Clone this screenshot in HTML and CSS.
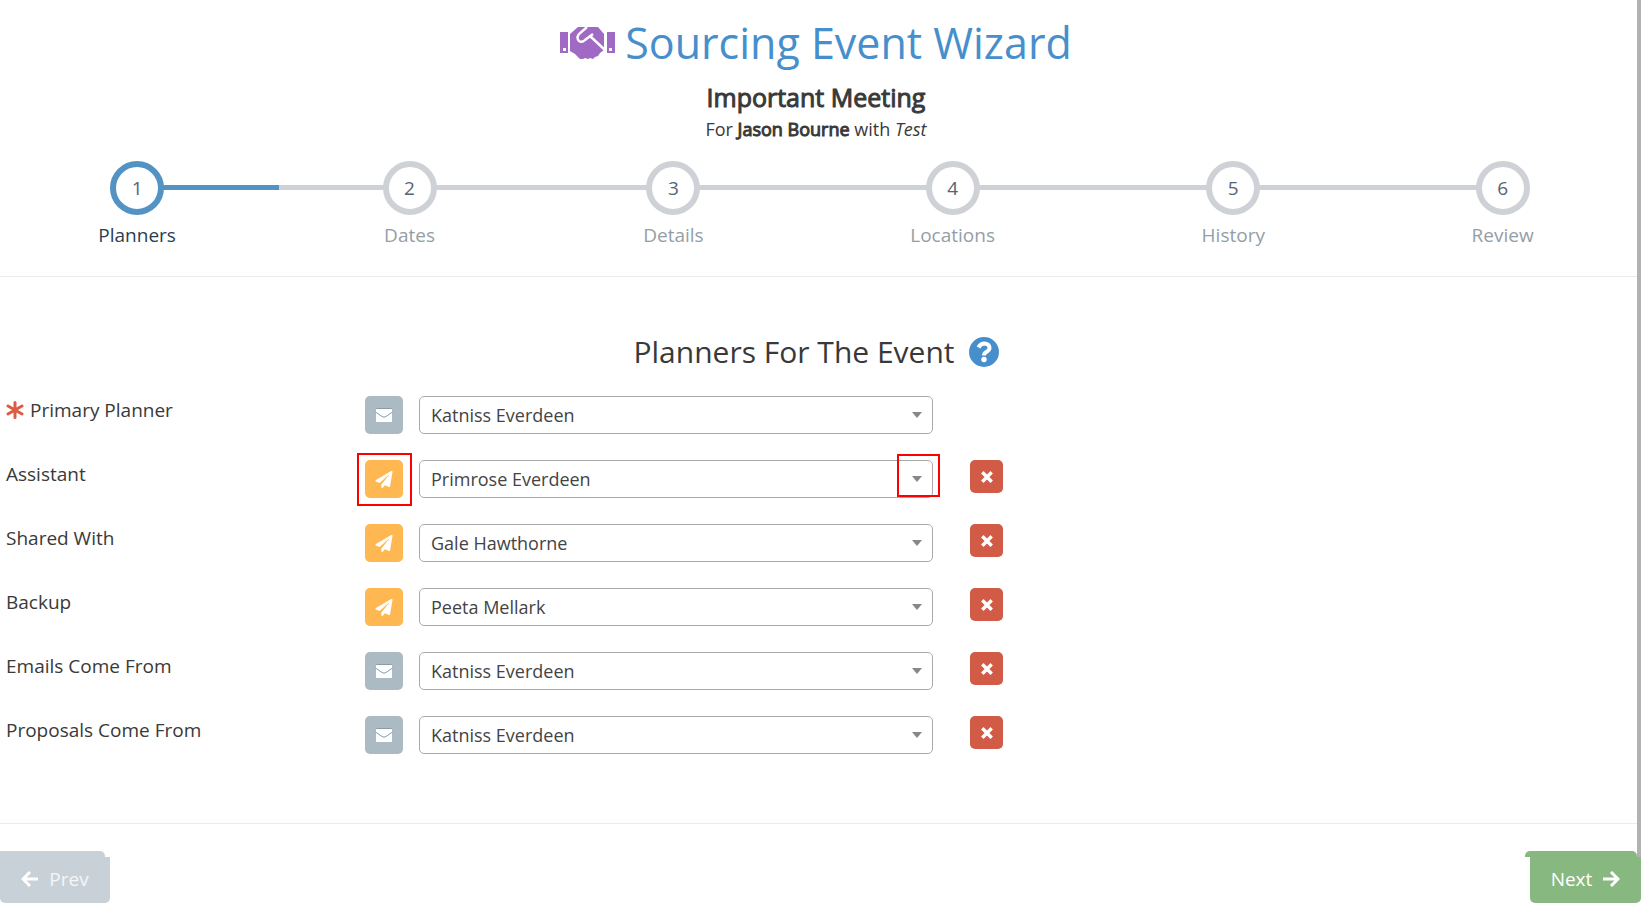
FILE: index.html
```html
<!DOCTYPE html>
<html lang="en">
<head>
    <meta charset="UTF-8">
    <meta name="viewport" content="width=device-width, initial-scale=1.0">
    <title>Sourcing Event Wizard</title>
    <link rel="stylesheet" href="styles.css">
</head>
<body>
    <!-- Shared icons -->
    <svg class="sprite" aria-hidden="true">
        <symbol id="icon-mail" viewBox="0 0 18 14">
            <path fill="#fff" d="M1 0h16v14H1z"/>
            <path fill="none" stroke="#8d9ba5" d="M1 0.5h16M0.5 4L7 8.500q2 1.300 4 0L17.500 4"/>
        </symbol>
        <symbol id="icon-send" viewBox="0 0 512 512">
            <path fill="#fff" d="M476 3.200L12.500 270.600c-18.100 10.400-15.800 35.600 2.200 43.200L121 358.400l287.300-253.200c5.500-4.900 13.300 2.600 8.600 8.300L176 407v80.500c0 23.600 28.500 32.900 42.500 15.800L282 426l124.600 52.200c14.200 6 30.400-2.900 33-18.200l72-432C515 7.800 493.300-6.800 476 3.200z"/>
        </symbol>
        <symbol id="icon-remove" viewBox="0 0 12 12">
            <path fill="none" stroke="#fff" stroke-width="3.400" d="M1.300 1.300l9.400 9.400M10.700 1.300l-9.400 9.400"/>
        </symbol>
    </svg>

    <header>
        <h1>
            <svg class="logo" viewBox="0 0 55 32" aria-hidden="true">
                <path fill="#a069c3" d="M0 5h8v21H0zM47 5h8v21h-8zM18 0h20l6 7v16l-4 3-2 3-3 1-2 2-3-1-2 1-3-1-2 1h-3l-5-5-5-3V7z"/>
                <path fill="none" stroke="#fff" stroke-width="2.400" d="M27 0l-8 7q-3 4 0 7 3 2 6-1l8-6M30 9l15 14"/>
                <path fill="#fff" d="M3 21h3v3H3zM49 21h3v3h-3z"/>
            </svg>
            Sourcing Event Wizard
        </h1>
        <h2>Important Meeting</h2>
        <p class="subtitle">For <b>Jason Bourne</b> with <i>Test</i></p>

        <ol class="steps">
            <li class="active"><span class="circle">1</span><span class="title">Planners</span></li>
            <li><span class="circle">2</span><span class="title">Dates</span></li>
            <li><span class="circle">3</span><span class="title">Details</span></li>
            <li><span class="circle">4</span><span class="title">Locations</span></li>
            <li><span class="circle">5</span><span class="title">History</span></li>
            <li><span class="circle">6</span><span class="title">Review</span></li>
        </ol>
    </header>

    <main>
        <h3>
            Planners For The Event
            <svg class="help" viewBox="0 0 30 30" role="img" aria-label="Help">
                <circle cx="15" cy="15" r="15" fill="#478fcc"/>
                <path fill="none" stroke="#fff" stroke-width="4" d="M9.500 10.500q2-4 6-4 5 0.500 5 4.500 0 2-2.500 3.500-3 1.500-3 4"/>
                <circle cx="15" cy="22.500" r="2.700" fill="#fff"/>
            </svg>
        </h3>

        <div class="row">
            <label for="primary">
                <svg class="required" viewBox="0 0 18 18" aria-hidden="true"><path stroke="#dd5a43" stroke-width="3" stroke-linecap="round" d="M9 1.500v15M2 5l14 8M16 5L2 13"/></svg>
                Primary Planner
            </label>
            <button class="btn mail" aria-label="Email"><svg><use href="#icon-mail"/></svg></button>
            <div class="field"><select id="primary"><option>Katniss Everdeen</option></select></div>
        </div>
        <div class="row highlighted">
            <label for="assistant">Assistant</label>
            <button class="btn send" aria-label="Send"><svg><use href="#icon-send"/></svg></button>
            <div class="field"><select id="assistant"><option>Primrose Everdeen</option></select></div>
            <button class="btn remove" aria-label="Remove"><svg><use href="#icon-remove"/></svg></button>
        </div>
        <div class="row">
            <label for="shared">Shared With</label>
            <button class="btn send" aria-label="Send"><svg><use href="#icon-send"/></svg></button>
            <div class="field"><select id="shared"><option>Gale Hawthorne</option></select></div>
            <button class="btn remove" aria-label="Remove"><svg><use href="#icon-remove"/></svg></button>
        </div>
        <div class="row">
            <label for="backup">Backup</label>
            <button class="btn send" aria-label="Send"><svg><use href="#icon-send"/></svg></button>
            <div class="field"><select id="backup"><option>Peeta Mellark</option></select></div>
            <button class="btn remove" aria-label="Remove"><svg><use href="#icon-remove"/></svg></button>
        </div>
        <div class="row">
            <label for="emails">Emails Come From</label>
            <button class="btn mail" aria-label="Email"><svg><use href="#icon-mail"/></svg></button>
            <div class="field"><select id="emails"><option>Katniss Everdeen</option></select></div>
            <button class="btn remove" aria-label="Remove"><svg><use href="#icon-remove"/></svg></button>
        </div>
        <div class="row">
            <label for="proposals">Proposals Come From</label>
            <button class="btn mail" aria-label="Email"><svg><use href="#icon-mail"/></svg></button>
            <div class="field"><select id="proposals"><option>Katniss Everdeen</option></select></div>
            <button class="btn remove" aria-label="Remove"><svg><use href="#icon-remove"/></svg></button>
        </div>
    </main>

    <footer>
        <button class="nav prev" disabled>
            <svg viewBox="0 0 18 16" aria-hidden="true"><path d="M9 1L2 8l7 7M2 8h15"/></svg>
            Prev
        </button>
        <button class="nav next">
            Next
            <svg viewBox="0 0 18 16" aria-hidden="true"><path d="M9 1l7 7-7 7M16 8H1"/></svg>
        </button>
    </footer>

    <div class="scrollbar"></div>
</body>
</html>
```
FILE: styles.css
```css
/* General styling */
*, *::before, *::after {
    box-sizing: border-box;
}

body {
    position: relative;
    margin: 0;
    font-family: "Open Sans", sans-serif;
    font-size: 18px;
    color: #393939;
    background-color: #fff;
}

.sprite {
    display: none;
}

/* Header */
header {
    padding: 12px 4px 27px 0;
    border-bottom: 1px solid #ebebeb;
    text-align: center;
}

h1, h2, h3, p {
    margin: 0;
    padding-right: 5px;
    font-weight: 400;
}

h1 {
    display: flex;
    justify-content: center;
    align-items: center;
    gap: 10px;
    font-size: 43px;
    line-height: 62px;
    color: #478fcc;
}

.logo {
    width: 55px;
    height: 32px;
}

h2 {
    margin-top: 7px;
    font-size: 25px;
    line-height: 32px;
    -webkit-text-stroke: 1px #393939;
}

.subtitle {
    line-height: 32px;
}

.subtitle b {
    font-weight: 400;
    -webkit-text-stroke: 1px #393939;
}

/* Wizard steps */
.steps {
    display: flex;
    margin: 16px 0 0 -5px;
    padding: 0;
    list-style: none;
}

.steps li {
    position: relative;
    flex: 1 1 auto;
    display: flex;
    flex-direction: column;
    align-items: center;
}

/* connecting line, one half on each side of the circle */
.steps li::before,
.steps li::after {
    content: "";
    position: absolute;
    top: 24px;
    width: 50%;
    height: 5px;
    background-color: #ced1d6;
}

.steps li::before {
    left: 0;
}

.steps li::after {
    right: 0;
}

.steps li:first-child::before,
.steps li:last-child::after {
    display: none;
}

.circle {
    position: relative;
    z-index: 1;
    width: 54px;
    height: 54px;
    border: 6px solid #ced1d6;
    border-radius: 50%;
    background-color: #fff;
    font-size: 19px;
    line-height: 42px;
    color: #546474;
}

.title {
    margin-top: 6px;
    font-size: 19px;
    line-height: 28px;
    color: #949ea7;
}

.steps .active::after {
    background-color: #5293c4;
}

.active .circle {
    border-color: #5293c4;
}

.active .title {
    color: #2b3d53;
}

/* Planner form */
main {
    padding: 52px 4px 69px 0;
    border-bottom: 1px solid #ebebeb;
}

h3 {
    display: flex;
    justify-content: center;
    align-items: center;
    gap: 14px;
    margin-bottom: 21px;
    font-size: 30px;
    line-height: 46px;
}

.help {
    width: 30px;
    height: 30px;
}

.row {
    display: grid;
    grid-template-columns: 365fr 38px 567fr 33px 634fr;
    align-items: start;
    height: 38px;
    margin-bottom: 26px;
}

.row:last-child {
    margin-bottom: 0;
}

label {
    display: flex;
    align-items: center;
    gap: 6px;
    padding-left: 6px;
    font-size: 19px;
    line-height: 28px;
}

.required {
    width: 18px;
    height: 18px;
}

.btn {
    position: relative;
    display: flex;
    justify-content: center;
    align-items: center;
    width: 38px;
    height: 38px;
    padding: 0;
    border: none;
    border-radius: 5px;
    cursor: pointer;
}

.btn svg {
    width: 18px;
    height: 14px;
}

.mail {
    background-color: #abbac3;
}

.send {
    background-color: #ffb752;
}

.send svg {
    height: 17px;
}

.remove {
    width: 33px;
    height: 33px;
    background-color: #d15b47;
}

.remove svg {
    width: 12px;
    height: 12px;
}

.field {
    position: relative;
    margin: 0 37px 0 16px;
}

select {
    appearance: none;
    width: 100%;
    height: 38px;
    padding: 0 11px;
    border: 1px solid #aaa;
    border-radius: 5px;
    background-color: #fff;
    font-family: inherit;
    font-size: 18px;
    color: #444;
}

.field::before {
    content: "";
    position: absolute;
    top: 16px;
    right: 11px;
    border: 5px solid transparent;
    border-top: 6px solid #888;
    border-bottom: none;
}

/* Red call-out boxes */
.highlighted .send::after,
.highlighted .field::after {
    content: "";
    position: absolute;
    border: 2px solid #f00;
}

.highlighted .send::after {
    inset: -7px -9px -8px -8px;
}

.highlighted .field::after {
    top: -6px;
    right: -7px;
    width: 43px;
    height: 43px;
}

/* Prev / next buttons */
footer {
    display: flex;
    justify-content: space-between;
    padding-top: 33px;
}

.nav {
    position: relative;
    z-index: 2;
    display: flex;
    justify-content: center;
    align-items: center;
    gap: 10px;
    width: 110px;
    height: 46px;
    padding: 0 0 2px;
    border: none;
    border-radius: 0 0 5px 5px;
    font-family: inherit;
    font-size: 19px;
    color: #fff;
}

.nav::before {
    content: "";
    position: absolute;
    top: -6px;
    width: 105px;
    height: 6px;
    border-radius: 0 5px 0 0;
    background-color: inherit;
}

.nav svg {
    width: 18px;
    height: 16px;
    fill: none;
    stroke: #fff;
    stroke-width: 3;
}

.prev {
    background-color: #c9d1d8;
    color: #f4f6f8;
}

.prev::before {
    left: 0;
}

.next {
    width: 111px;
    background-color: #87b87f;
}

.next::before {
    right: 4px;
    width: 112px;
    border-radius: 5px 5px 0 0;
}

.scrollbar {
    position: absolute;
    top: 0;
    right: 0;
    bottom: 46px;
    width: 4px;
    background-color: #b2b2b2;
}
```
